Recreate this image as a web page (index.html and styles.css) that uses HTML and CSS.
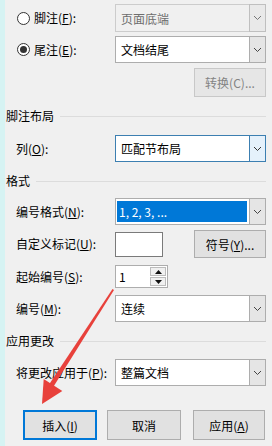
FILE: index.html
```html
<!DOCTYPE html>
<html lang="zh-CN">
<head>
<meta charset="utf-8">
<title>脚注和尾注</title>
<link rel="stylesheet" href="styles.css">
</head>
<body>
<div class="page">
  <div class="strip"></div>
  <div class="dlg">
    <div class="row r1">
      <label class="lbl radio-lbl"><span class="rb"></span>脚注(<u>F</u>):</label>
      <div class="combo disabled"><span class="val">页面底端</span><span class="dd"><svg width="9" height="6" viewBox="0 0 9 6"><path d="M1 1 L4.5 4.5 L8 1" fill="none" stroke="#777" stroke-width="1"/></svg></span></div>
    </div>
    <div class="row r2">
      <label class="lbl radio-lbl"><span class="rb on"></span>尾注(<u>E</u>):</label>
      <div class="combo"><span class="val">文档结尾</span><span class="dd"><svg width="9" height="6" viewBox="0 0 9 6"><path d="M1 1 L4.5 4.5 L8 1" fill="none" stroke="#444" stroke-width="1"/></svg></span></div>
    </div>
    <div class="row r3">
      <span class="lbl"></span>
      <span class="gap"></span>
      <button class="btn side disabled-btn">转换(C)...</button>
    </div>
    <div class="head h1"><span>脚注布局</span><i></i></div>
    <div class="row r4">
      <label class="lbl">列(<u>O</u>):</label>
      <div class="combo focus"><span class="val">匹配节布局</span><span class="dd"><svg width="9" height="6" viewBox="0 0 9 6"><path d="M1 1 L4.5 4.5 L8 1" fill="none" stroke="#333" stroke-width="1"/></svg></span></div>
    </div>
    <div class="head h2"><span>格式</span><i></i></div>
    <div class="row r5">
      <label class="lbl">编号格式(<u>N</u>):</label>
      <div class="combo"><span class="val sel">1, 2, 3, ...</span><span class="dd"><svg width="9" height="6" viewBox="0 0 9 6"><path d="M1 1 L4.5 4.5 L8 1" fill="none" stroke="#444" stroke-width="1"/></svg></span></div>
    </div>
    <div class="row r6">
      <label class="lbl">自定义标记(<u>U</u>):</label>
      <div class="textbox"></div>
      <span class="gap"></span>
      <button class="btn side">符号(<u>Y</u>)...</button>
    </div>
    <div class="row r7">
      <label class="lbl">起始编号(<u>S</u>):</label>
      <div class="spin"><span class="num">1</span><span class="arrows"><span class="up"><svg width="7" height="4" viewBox="0 0 7 4"><path d="M0 4 L3.5 0 L7 4Z" fill="#111"/></svg></span><span class="down"><svg width="7" height="4" viewBox="0 0 7 4"><path d="M0 0 L3.5 4 L7 0Z" fill="#111"/></svg></span></span></div>
    </div>
    <div class="row r8">
      <label class="lbl">编号(<u>M</u>):</label>
      <div class="combo"><span class="val">连续</span><span class="dd"><svg width="9" height="6" viewBox="0 0 9 6"><path d="M1 1 L4.5 4.5 L8 1" fill="none" stroke="#444" stroke-width="1"/></svg></span></div>
    </div>
    <div class="head h3"><span>应用更改</span><i></i></div>
    <div class="row r9">
      <label class="lbl">将更改应用于(<u>P</u>):</label>
      <div class="combo"><span class="val">整篇文档</span><span class="dd"><svg width="9" height="6" viewBox="0 0 9 6"><path d="M1 1 L4.5 4.5 L8 1" fill="none" stroke="#444" stroke-width="1"/></svg></span></div>
    </div>
    <div class="btnrow">
      <button class="btn main default">插入(<u>I</u>)</button>
      <button class="btn main">取消</button>
      <button class="btn main apply">应用(<u>A</u>)</button>
    </div>
  </div>
  <svg class="arrow" width="272" height="446" viewBox="0 0 272 446">
    <polygon points="112.5,289 114,290 52,389 48,386" fill="#e8413b"/>
    <polygon points="42,404 43.7,379.1 62.3,390.9" fill="#e8413b"/>
  </svg>
</div>
</body>
</html>
```
FILE: styles.css
```css
* { box-sizing: border-box; }
html, body { margin: 0; padding: 0; }
body {
  width: 272px;
  height: 446px;
  overflow: hidden;
  background: #f0f0f0;
  font-family: "Noto Sans CJK SC", "Microsoft YaHei", sans-serif;
  font-size: 12px;
  color: #000;
}
.page {
  position: relative;
  display: flex;
  width: 272px;
  height: 446px;
}
.strip {
  width: 5px;
  flex: none;
  background: #d6f3f3;
}
.dlg {
  flex: 1;
  padding-left: 1px;
  display: flex;
  flex-direction: column;
}
u { text-decoration: underline; text-underline-offset: 1px; }
.row {
  display: flex;
  align-items: center;
  padding-left: 10px;
}
.lbl {
  width: 99px;
  flex: none;
  display: flex;
  align-items: center;
  line-height: 14px;
  white-space: nowrap;
}
.radio-lbl { padding-left: 1px; }
.rb {
  width: 13px;
  height: 13px;
  border: 1px solid #333;
  border-radius: 50%;
  background: #fff;
  margin-right: 4px;
  display: flex;
  align-items: center;
  justify-content: center;
}
.rb.on::after {
  content: "";
  width: 7px;
  height: 7px;
  border-radius: 50%;
  background: #333;
}
.combo {
  width: 151px;
  height: 100%;
  display: flex;
  border: 1px solid #adadad;
  background: #fff;
}
.combo .val {
  flex: 1;
  display: flex;
  align-items: center;
  padding-left: 4px;
  margin: 2px 0 2px 1px;
}
.combo .val.sel {
  background: #0078d7;
  color: #fff;
  padding-left: 2px;
  margin-right: 2px;
}
.combo .dd {
  width: 17px;
  flex: none;
  margin: -1px -1px -1px 0;
  border: 1px solid #adadad;
  background: #e5e5e5;
  display: flex;
  align-items: center;
  justify-content: center;
}
.combo.disabled { background: #f0f0f0; border-color: #cccccc; color: #6d6d6d; }
.combo.disabled .dd { border-color: #bfbfbf; background: #e9e9e9; }
.combo.focus { border-color: #3c7fb1; }
.combo.focus .dd { border-color: #3c7fb1; background: #e5f1fb; }
.gap { flex: 1; }
.btn {
  font-family: inherit;
  font-size: 12px;
  color: #000;
  background: #e1e1e1;
  border: 1px solid #adadad;
  padding: 0;
  display: flex;
  align-items: center;
  justify-content: center;
  height: 100%;
}
.btn.side { width: 72px; margin-right: 6px; }
.btn.disabled-btn { background: #e6e6e6; border-color: #c8c8c8; color: #838383; }
.textbox {
  width: 48px;
  height: 25px;
  background: #fff;
  border: 1px solid #7a7a7a;
}
.spin {
  width: 53px;
  height: 100%;
  display: flex;
  border: 1px solid #adadad;
  background: #fff;
}
.spin .num { flex: 1; padding-left: 3px; display: flex; align-items: center; }
.spin .arrows {
  width: 16px;
  display: flex;
  flex-direction: column;
  margin: 1px 1px 1px 0;
  gap: 1px;
}
.spin .arrows span {
  flex: 1;
  background: #f0f0f0;
  border: 1px solid #bcbcbc;
  display: flex;
  align-items: center;
  justify-content: center;
}
.head {
  display: flex;
  align-items: center;
  height: 14px;
  line-height: 14px;
}
.head i {
  flex: 1;
  height: 1px;
  background: #dcdcdc;
  margin: 1px 6px 0 6px;
}
.r1 { margin-top: 4px; height: 28px; }
.r2 { margin-top: 4px; height: 27px; }
.r3 { margin-top: 5px; height: 29px; }
.h1 { margin-top: 12px; }
.r4 { margin-top: 12px; height: 27px; }
.h2 { margin-top: 12px; }
.r5 { margin-top: 10px; height: 27px; }
.r6 { margin-top: 5px; height: 28px; }
.r7 { margin-top: 7px; height: 23px; }
.r8 { margin-top: 7px; height: 27px; }
.h3 { margin-top: 12px; }
.r9 { margin-top: 11px; height: 27px; }
.btnrow {
  margin-top: 24px;
  height: 30px;
  display: flex;
  padding-left: 17px;
  gap: 10px;
}
.btn.main { width: 74px; }
.btn.main.apply { width: 72px; margin-left: 2px; }
.btn.default { border: 2px solid #0078d7; }
.arrow {
  position: absolute;
  left: 0;
  top: 0;
  pointer-events: none;
}
```
